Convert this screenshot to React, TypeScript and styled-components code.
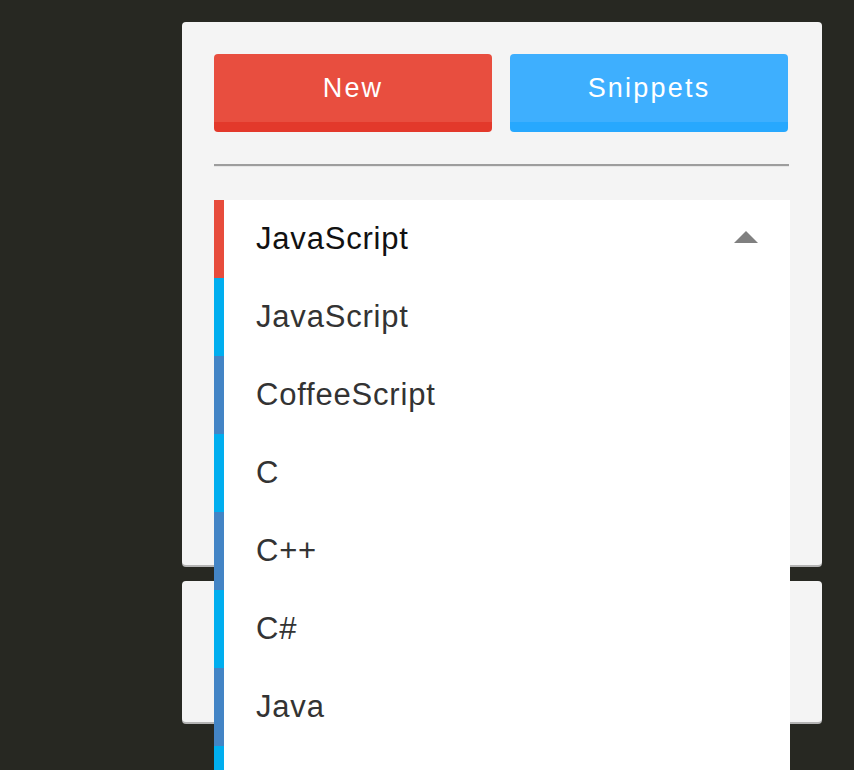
import React from 'react';
import styled, { createGlobalStyle } from 'styled-components';

const GlobalStyle = createGlobalStyle`
  html, body {
    margin: 0;
    padding: 0;
    background: #272822;
    font-family: "Liberation Sans", Arial, Helvetica, sans-serif;
  }
`;

const StyledPage = styled.div`
  display: flex;
  flex-direction: column;
  gap: 16px;
  box-sizing: border-box;
  width: 822px;
  min-height: 100vh;
  padding: 22px 0 0 182px;
  overflow: hidden;
`;

const StyledPanel = styled.div<{ $height: number }>`
  position: relative;
  flex-shrink: 0;
  box-sizing: border-box;
  height: ${(p) => p.$height}px;
  padding: 32px;
  background: #f4f4f4;
  border-radius: 4px;
  box-shadow: 0 2px 0 #b4b4b4;
`;

const StyledButtons = styled.div`
  display: grid;
  grid-template-columns: 278px 278px;
  gap: 18px;
`;

const StyledButton = styled.button<{ $color: string; $stripe: string }>`
  height: 78px;
  box-sizing: border-box;
  border: none;
  border-bottom: 10px solid ${(p) => p.$stripe};
  border-radius: 4px;
  background: ${(p) => p.$color};
  color: #fff;
  font-family: "Liberation Sans", Arial, sans-serif;
  font-size: 27px;
  letter-spacing: 2.2px;
  padding: 0;
  cursor: pointer;
`;

const StyledDivider = styled.hr`
  margin: 32px 0 0;
  width: 575px;
  height: 0;
  border: none;
  border-top: 2px solid #9d9d9d;
  border-bottom: 1px solid #e6e6e6;
`;

const StyledSelect = styled.div`
  position: relative;
  margin-top: 33px;
`;

const StyledOption = styled.div<{ $bar: string; $selected?: boolean }>`
  display: flex;
  align-items: center;
  justify-content: space-between;
  flex-shrink: 0;
  box-sizing: border-box;
  height: 78px;
  padding: 0 32px 0 32px;
  background: #fff;
  border-left: 10px solid ${(p) => p.$bar};
  color: ${(p) => (p.$selected ? '#111' : '#333')};
  font-size: 31px;
  letter-spacing: 0.8px;
`;

const StyledArrow = styled.span`
  width: 0;
  height: 0;
  border-left: 12px solid transparent;
  border-right: 12px solid transparent;
  border-bottom: 12px solid #808080;
  margin-bottom: 4px;
`;

const StyledList = styled.div`
  position: absolute;
  top: 78px;
  left: 0;
  right: 0;
  z-index: 10;
  display: flex;
  flex-direction: column;
  height: calc(100vh - 278px);
  overflow: hidden;
`;

const languages = ['JavaScript', 'CoffeeScript', 'C', 'C++', 'C#', 'Java'];

const App = () => (
  <>
    <GlobalStyle />
    <StyledPage>
      <StyledPanel $height={543}>
        <StyledButtons>
          <StyledButton $color="#e84e3f" $stripe="#e3392b">New</StyledButton>
          <StyledButton $color="#3eaffe" $stripe="#27a8fe">Snippets</StyledButton>
        </StyledButtons>
        <StyledDivider />
        <StyledSelect>
          <StyledOption $bar="#e74c3c" $selected>
            <span>JavaScript</span>
            <StyledArrow />
          </StyledOption>
          <StyledList>
            {languages.map((lang, i) => (
              <StyledOption key={lang} $bar={i % 2 === 0 ? '#00aeef' : '#4384c5'}>
                <span>{lang}</span>
              </StyledOption>
            ))}
            {/* next entry, scrolled below the fold */}
            <StyledOption $bar="#00aeef" />
          </StyledList>
        </StyledSelect>
      </StyledPanel>
      <StyledPanel $height={141} />
    </StyledPage>
  </>
);

export default App;
